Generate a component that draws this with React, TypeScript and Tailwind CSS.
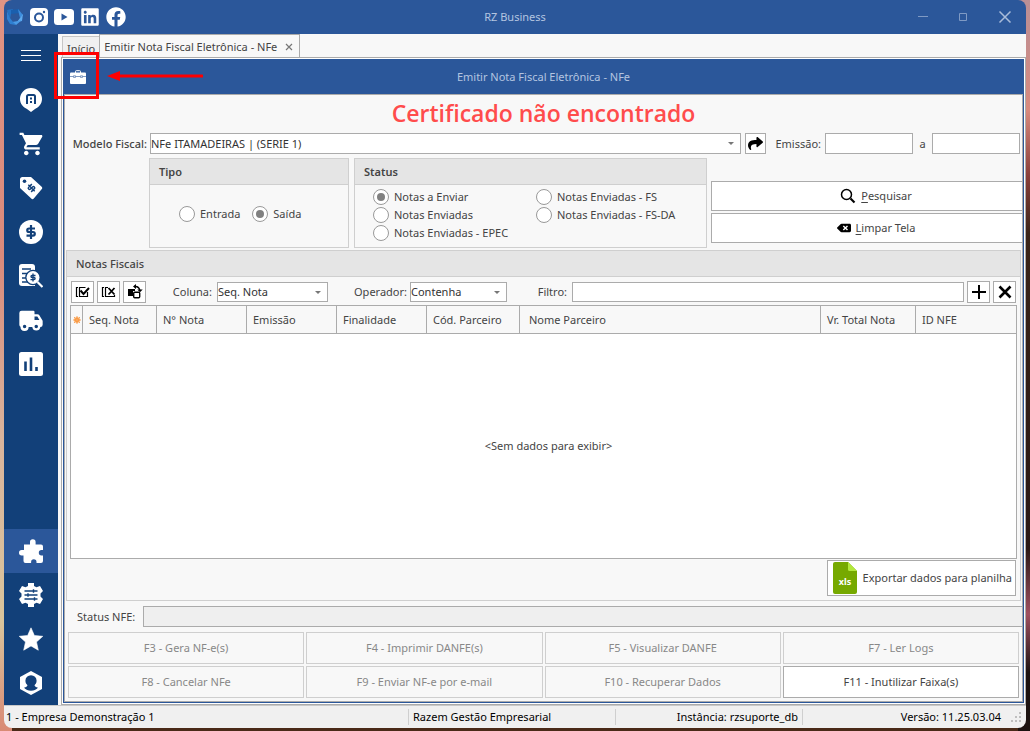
import React, { useState } from 'react';
import { FaBackspace, FaFacebook, FaLinkedin, FaShare } from 'react-icons/fa';
import { IoMdCart } from 'react-icons/io';
import { BiSolidTruck } from 'react-icons/bi';

const InstagramIcon = () => (
  <svg viewBox="0 0 18 18" className="h-[18px] w-[18px]">
    <rect width="18" height="18" rx="4" fill="#fff" />
    <circle cx="9" cy="9.500" r="4" fill="none" stroke="#2b579a" strokeWidth="2" />
    <circle cx="14" cy="4" r="1.200" fill="#2b579a" />
  </svg>
);

const YoutubeIcon = () => (
  <svg viewBox="0 0 20 16" className="h-4 w-5">
    <rect width="20" height="16" rx="3.500" fill="#fff" />
    <path d="M7.500 4.500 13.500 8l-6 3.500z" fill="#2b579a" />
  </svg>
);

const LogoIcon = () => (
  <svg viewBox="0 0 18 18" className="h-[18px] w-[18px]">
    <path d="M1 2l6-1-2 5-1 5z" fill="#2472c4" />
    <path d="M5 2l8-1 1 4-9 1z" fill="#1a5fae" />
    <path d="M12 1l5 6-3 3-1-4z" fill="#3c8ddd" />
    <path d="M17 6l-1 7-5 1 3-4z" fill="#5fabf0" />
    <path d="M16 12l-6 5-4-3 6-1z" fill="#4a9be6" />
    <path d="M1 3l3 7 3 4 3 3-6-1-3-5z" fill="#2f80d2" />
  </svg>
);

const PinIcon = () => (
  <svg viewBox="0 0 24 24" className="h-6 w-6">
    <path d="M12 0a11 11 0 0 1 11 11c0 5-3.500 8.500-7 10l-4 3-4-3c-3.500-1.500-7-5-7-10A11 11 0 0 1 12 0z" fill="#fff" />
    <path d="M8 16V8.500A1.500 1.500 0 0 1 9.500 7h5A1.500 1.500 0 0 1 16 8.500V16" fill="none" stroke="#124079" strokeWidth="2" />
    <path d="M11 9.500h2v2h-2zM11 13h2v2h-2z" fill="#124079" />
  </svg>
);

const TagIcon = () => (
  <svg viewBox="0 0 24 24" className="h-6 w-6">
    <path d="M3.500 1H12l10.400 9.500a2 2 0 0 1 0 3L15 22.300a2 2 0 0 1-3 0L1 12V3.500A2.500 2.500 0 0 1 3.500 1z" fill="#fff" />
    <circle cx="5.500" cy="5.200" r="1.800" fill="#124079" />
    <g transform="rotate(-45 12.500 12)" fill="none" stroke="#124079" strokeWidth="1.500">
      <path d="M15.500 9.500h-4.500a1.200 1.200 0 0 0 0 2.500h3a1.200 1.200 0 0 1 0 2.500H9.500M12.500 7.500v9" />
    </g>
  </svg>
);

const DollarIcon = () => (
  <svg viewBox="0 0 24 24" className="h-6 w-6">
    <circle cx="12" cy="12" r="12" fill="#fff" />
    <path d="M16 8.500H10a1.700 1.700 0 0 0 0 3.500h4a1.800 1.800 0 0 1 0 3.600H7.500M12 5v14" fill="none" stroke="#124079" strokeWidth="2.200" />
  </svg>
);

const ReportIcon = () => (
  <svg viewBox="0 0 24 24" className="h-6 w-6">
    <path d="M3 0h10a3 3 0 0 1 3 3v19H3a3 3 0 0 1-3-3V3a3 3 0 0 1 3-3z" fill="#fff" />
    <path d="M3 5h9M3 9.500h5M3 14h4M3 18h6" stroke="#124079" strokeWidth="1.600" />
    <circle cx="14" cy="13.500" r="7.800" fill="#124079" />
    <circle cx="14" cy="13.500" r="6.500" fill="#fff" />
    <path d="M18.500 18l5 5" stroke="#fff" strokeWidth="2.200" />
    <path d="M16.500 11.500h-3.500a1 1 0 0 0 0 2h2a1 1 0 0 1 0 2.200h-3.500M14 9.500v8" fill="none" stroke="#124079" strokeWidth="1.300" />
  </svg>
);

const ChartIcon = () => (
  <svg viewBox="0 0 24 24" className="h-6 w-6">
    <rect width="24" height="24" rx="2.500" fill="#fff" />
    <path d="M6.500 9.500V19M12 5.500V19M17.500 15V19" stroke="#124079" strokeWidth="2.600" />
  </svg>
);

const PuzzleIcon = () => (
  <svg viewBox="0 0 24 24" className="h-6 w-6" fill="#fff">
    <path d="M5 5.500h6V3a2.800 2.800 0 0 1 5.600 0v2.500H22a2 2 0 0 1 2 2V11h-1.500a2.700 2.700 0 0 0 0 5.400H24V22a2 2 0 0 1-2 2h-4.500v-1a2.700 2.700 0 0 0-5.400 0v1H6.500a2 2 0 0 1-2-2v-5.500H2.700a2.700 2.700 0 0 1 0-5.400H5z" />
  </svg>
);

const GearIcon = () => (
  <svg viewBox="0 0 24 24" className="h-6 w-6">
    <path d="M9 0h6v3l2.500 1.200L21 3l3 5-2.500 2.500v3L24 16l-3 5-3.500-1.200L15 21v3H9v-3l-2.500-1.200L3 21l-3-5 2.500-2.500v-3L0 8l3-5 3.500 1.200L9 3z" fill="#fff" />
    <path d="M5.500 8h13M5.500 12h13M5.500 16h13M14.500 6.300v3.400M9 10.300v3.400M15.500 14.300v3.400" stroke="#124079" strokeWidth="1.400" />
  </svg>
);

const StarIcon = () => (
  <svg viewBox="0 0 24 24" className="h-6 w-6">
    <path d="M12 .8l3.400 7.700 8.400.8-6.300 5.600 1.800 8.300L12 18.900l-7.300 4.300 1.800-8.300L.2 9.300l8.400-.8z" fill="#fff" stroke="#fff" strokeLinejoin="round" strokeWidth=".6" />
  </svg>
);

const UserIcon = () => (
  <svg viewBox="0 0 24 24" className="h-6 w-6">
    <path d="M12 0l11 6v12l-11 6-11-6V6z" fill="#fff" />
    <path d="M12 4.200a5.600 5.600 0 0 1 5.600 5.600c0 2.200-1 3.400-2.100 4.400.3 1.200 1.300 1.700 3.500 2.600-1.800 1.800-4.200 3-7 3s-5.200-1.200-7-3c2.200-.9 3.200-1.400 3.500-2.600-1.100-1-2.100-2.200-2.100-4.400A5.600 5.600 0 0 1 12 4.200z" fill="#124079" />
  </svg>
);

const MenuIcon = () => (
  <svg viewBox="0 0 20 12" className="h-3 w-5">
    <path d="M0 .5h20M0 5.500h20M0 10.500h20" stroke="#fff" />
  </svg>
);

const BriefcaseIcon = () => (
  <svg viewBox="0 0 16 14" className="h-[14px] w-4">
    <path d="M5.500 3V1.500a.8.8 0 0 1 .8-.8h3.400a.8.8 0 0 1 .8.800V3" fill="none" stroke="#fff" />
    <rect y="2.500" width="16" height="11.500" rx="1" fill="#fff" />
    <path d="M0 6.500h3M6 6.500h4M13 6.500h3" stroke="#2b579a" strokeWidth=".6" />
    <path d="M3.500 5.800h2v1.600h-2zM10.500 5.800h2v1.600h-2z" fill="none" stroke="#2b579a" strokeWidth=".6" />
  </svg>
);

const CheckAllIcon = () => (
  <svg viewBox="0 0 16 14" className="h-[14px] w-4" fill="none" stroke="#000">
    <path d="M3 2.500H1.500v9H3M12.500 7v4.500h-8v-9h6" strokeWidth="1.200" />
    <path d="M5.500 5.500l3 3.500L14 3" strokeWidth="2" />
  </svg>
);

const UncheckAllIcon = () => (
  <svg viewBox="0 0 16 14" className="h-[14px] w-4" fill="none" stroke="#000">
    <path d="M3 2.500H1.500v9H3M7 2.500H4.500v9h9V10" strokeWidth="1.200" />
    <path d="M7.500 3l6 6.500M13.500 3l-6 6.500" strokeWidth="1.800" />
  </svg>
);

const InvertIcon = () => (
  <svg viewBox="0 0 16 16" className="h-4 w-4" fill="none" stroke="#000">
    <path d="M1 5h7v2H6v5H1z" fill="#000" stroke="none" />
    <rect x="6.700" y="8.200" width="6" height="5.500" rx="1" fill="#fff" strokeWidth="1.400" />
    <path d="M7.500 2.500c3-.3 5 1.200 5.500 4.500" strokeWidth="1.400" />
    <path d="M9 0v5L6 2.500zM10.300 5.500h5.400L13 8.300z" fill="#000" stroke="none" />
  </svg>
);

const SearchIcon = () => (
  <svg viewBox="0 0 16 16" className="h-4 w-4" fill="none" stroke="#000">
    <circle cx="6.500" cy="6.500" r="5" strokeWidth="1.500" />
    <path d="M10.500 10.500l4 4" strokeWidth="2.200" />
  </svg>
);

const SunIcon = () => (
  <svg viewBox="0 0 10 10" className="mx-auto h-[10px] w-[10px]">
    <circle cx="5" cy="5" r="2.800" fill="#fb8f2d" />
    <path d="M5 1v8M1 5h8M2 2l6 6M8 2L2 8" stroke="#f9a55b" strokeWidth="1" />
  </svg>
);

const XlsIcon = () => (
  <svg viewBox="0 0 24 32" className="h-8 w-6">
    <path d="M2 0h13l9 9v21a2 2 0 0 1-2 2H2a2 2 0 0 1-2-2V2a2 2 0 0 1 2-2z" fill="#76a900" />
    <path d="M15 0l9 9h-7.500A1.500 1.500 0 0 1 15 7.500z" fill="#b2e83c" />
    <text x="12" y="23" textAnchor="middle" fontSize="9" fontWeight="700" fill="#fff">xls</text>
  </svg>
);

interface SelectProps {
  id: string;
  value: string;
  className?: string;
}

const Select: React.FC<SelectProps> = ({ id, value, className }) => (
  <div className={`relative ${className ?? ''}`}>
    <select id={id} defaultValue={value} className="block h-full w-full appearance-none border border-[#ababab] bg-white pr-5 text-[#333]">
      <option>{value}</option>
    </select>
    <svg viewBox="0 0 6 3" className="pointer-events-none absolute top-[9px] right-[7px] h-[3px] w-[6px]">
      <path d="M0 0h6L3 3z" fill="#777" />
    </svg>
  </div>
);

interface RadioProps {
  name: string;
  label: string;
  checked: boolean;
  onSelect: () => void;
}

const Radio: React.FC<RadioProps> = ({ name, label, checked, onSelect }) => (
  <label className="flex items-center gap-[5px]">
    <input
      type="radio"
      name={name}
      checked={checked}
      onChange={onSelect}
      className="grid h-4 w-4 shrink-0 appearance-none place-items-center rounded-full border border-[#999] bg-white before:h-2 before:w-2 before:rounded-full checked:before:bg-[#808080]"
    />
    {label}
  </label>
);

const menuTop = [
  { label: 'Menu', icon: <MenuIcon /> },
  { label: 'Módulos', icon: <PinIcon /> },
  { label: 'Vendas', icon: <IoMdCart className="h-7 w-7" /> },
  { label: 'Preços', icon: <TagIcon /> },
  { label: 'Financeiro', icon: <DollarIcon /> },
  { label: 'Fiscal', icon: <ReportIcon /> },
  { label: 'Entregas', icon: <BiSolidTruck className="h-7 w-7" /> },
  { label: 'Relatórios', icon: <ChartIcon /> },
];

const menuBottom = [
  { label: 'Integrações', icon: <PuzzleIcon />, active: true },
  { label: 'Configurações', icon: <GearIcon /> },
  { label: 'Favoritos', icon: <StarIcon /> },
  { label: 'Usuário', icon: <UserIcon /> },
];

const columns = [
  { label: 'Seq. Nota', width: 'w-[74px]' },
  { label: 'N° Nota', width: 'w-[90px]' },
  { label: 'Emissão', width: 'w-[90px]' },
  { label: 'Finalidade', width: 'w-[90px]' },
  { label: 'Cód. Parceiro', width: 'w-[93px]' },
  { label: 'Nome Parceiro', width: 'w-auto pl-[9px]' },
  { label: 'Vr. Total Nota', width: 'w-[95px]' },
  { label: 'ID NFE', width: 'w-[101px]' },
];

const actions = [
  { label: 'F3 - Gera NF-e(s)', enabled: false },
  { label: 'F4 - Imprimir DANFE(s)', enabled: false },
  { label: 'F5 - Visualizar DANFE', enabled: false },
  { label: 'F7 - Ler Logs', enabled: false },
  { label: 'F8 - Cancelar NFe', enabled: false },
  { label: 'F9 - Enviar NF-e por e-mail', enabled: false },
  { label: 'F10 - Recuperar Dados', enabled: false },
  { label: 'F11 - Inutilizar Faixa(s)', enabled: true },
];

const TitleBar = () => (
  <header className="grid h-[34px] grid-cols-[1fr_auto_1fr] items-center bg-[#2b579a] text-[#b4c5e0]">
    <div className="flex items-center gap-[6px] pl-[2px] text-white">
      <LogoIcon />
      <a href="#instagram" aria-label="Instagram"><InstagramIcon /></a>
      <a href="#youtube" aria-label="YouTube"><YoutubeIcon /></a>
      <a href="#linkedin" aria-label="LinkedIn"><FaLinkedin className="h-5 w-5" /></a>
      <a href="#facebook" aria-label="Facebook"><FaFacebook className="h-5 w-5" /></a>
    </div>
    <h1>RZ Business</h1>
    <div className="flex items-center justify-end gap-[30px] pr-[14px]">
      <button type="button" aria-label="Minimizar">
        <svg viewBox="0 0 10 10" className="h-[10px] w-[10px]"><path d="M0 4.500h10" stroke="#7f9ac4" /></svg>
      </button>
      <button type="button" aria-label="Maximizar">
        <svg viewBox="0 0 10 10" className="h-[10px] w-[10px]"><path d="M1.500 1.500h7v7h-7z" fill="none" stroke="#7f9ac4" /></svg>
      </button>
      <button type="button" aria-label="Fechar">
        <svg viewBox="0 0 14 14" className="h-[14px] w-[14px]"><path d="M1.500 1.500l11 11M12.500 1.500l-11 11" stroke="#a9bcd9" strokeWidth="1.500" /></svg>
      </button>
    </div>
  </header>
);

const Sidebar = () => (
  <nav className="flex w-[54px] shrink-0 flex-col justify-between bg-[#124079] text-white">
    <div>
      {menuTop.map((item) => (
        <button key={item.label} type="button" aria-label={item.label} className="grid h-11 w-full place-items-center">
          {item.icon}
        </button>
      ))}
    </div>
    <div>
      {menuBottom.map((item) => (
        <button key={item.label} type="button" aria-label={item.label} className={`grid h-11 w-full place-items-center ${item.active ? 'bg-[#2b579a]' : ''}`}>
          {item.icon}
        </button>
      ))}
    </div>
  </nav>
);

const Tabs = () => (
  <div className="flex h-[23px] items-end pl-[4px]">
    <button type="button" className="flex h-[21px] items-center border border-r-0 border-b-0 border-[#c6c6c6] bg-[#f0f0f0] px-1 pt-1">Início</button>
    <div className="flex h-[23px] items-center gap-[8px] border border-b-0 border-[#ababab] bg-[#f8f8f8] pt-[2px] pr-[6px] pl-1">
      <button type="button">Emitir Nota Fiscal Eletrônica - NFe</button>
      <button type="button" aria-label="Fechar aba">
        <svg viewBox="0 0 8 8" className="h-2 w-2"><path d="M1 1l6 6M7 1L1 7" stroke="#777" strokeWidth="1.200" /></svg>
      </button>
    </div>
  </div>
);

const Filters = () => {
  const [tipo, setTipo] = useState('Saída');
  const [status, setStatus] = useState('Notas a Enviar');

  const statusRadio = (label: string) => (
    <Radio name="status" label={label} checked={status === label} onSelect={() => setStatus(label)} />
  );

  return (
    <>
      <div className="flex h-[21px] items-center">
        <label htmlFor="modelo" className="w-[85px] shrink-0 pr-[3px] text-right font-medium whitespace-nowrap">Modelo Fiscal:</label>
        <Select id="modelo" value="NFe ITAMADEIRAS | (SERIE 1)" className="h-full flex-1" />
        <button type="button" aria-label="Ir para modelo" className="ml-1 grid h-full w-[21px] place-items-center border border-[#ababab] bg-white">
          <FaShare className="h-[15px] w-[15px] text-black" />
        </button>
        <label htmlFor="emissao-de" className="w-[59px] shrink-0 pr-1 text-right">Emissão:</label>
        <input id="emissao-de" type="text" className="h-full w-[88px] border border-[#ababab] bg-white px-1" />
        <label htmlFor="emissao-ate" className="w-[19px] text-center">a</label>
        <input id="emissao-ate" type="text" className="mr-[2px] h-full w-[88px] border border-[#ababab] bg-white px-1" />
      </div>
      <div className="mt-1 flex pl-[84px]">
        <fieldset className="flex h-[90px] w-[200px] flex-col border border-[#cfcfcf]" aria-label="Tipo">
          <h3 className="flex h-[26px] items-center border-b border-[#cfcfcf] bg-[#e5e5e5] px-[9px] font-semibold">Tipo</h3>
          <div className="flex flex-1 items-center gap-3 pb-1 pl-[29px]">
            <Radio name="tipo" label="Entrada" checked={tipo === 'Entrada'} onSelect={() => setTipo('Entrada')} />
            <Radio name="tipo" label="Saída" checked={tipo === 'Saída'} onSelect={() => setTipo('Saída')} />
          </div>
        </fieldset>
        <fieldset className="ml-[5px] flex h-[90px] flex-1 flex-col border border-[#cfcfcf]" aria-label="Status">
          <h3 className="flex h-[26px] items-center border-b border-[#cfcfcf] bg-[#e5e5e5] px-[9px] font-semibold">Status</h3>
          <div className="grid flex-1 grid-cols-[163px_1fr] content-start gap-y-[2px] pt-1 pl-[18px]">
            {statusRadio('Notas a Enviar')}
            {statusRadio('Notas Enviadas - FS')}
            {statusRadio('Notas Enviadas')}
            {statusRadio('Notas Enviadas - FS-DA')}
            {statusRadio('Notas Enviadas - EPEC')}
          </div>
        </fieldset>
        <div className="ml-1 flex w-[311px] flex-col gap-[2px] pt-[23px]">
          <button type="button" className="flex h-[30px] items-center justify-center gap-[5px] border border-r-0 border-[#ababab] bg-white pl-[18px]">
            <SearchIcon />
            <span><u className="underline-offset-2">P</u>esquisar</span>
          </button>
          <button type="button" className="flex h-[30px] items-center justify-center gap-[5px] border border-r-0 border-[#ababab] bg-white pl-[18px]">
            <FaBackspace className="h-[14px] w-[14px] text-black" />
            <span><u className="underline-offset-2">L</u>impar Tela</span>
          </button>
        </div>
      </div>
    </>
  );
};

const toolButton = 'grid h-[22px] w-[23px] shrink-0 place-items-center border border-[#ababab] bg-white';

const NotasFiscais = () => (
  <section className="mx-px mt-[2px] flex flex-1 flex-col border border-[#cfcfcf]">
    <h2 className="flex h-[26px] items-center border-b border-[#cfcfcf] bg-[#e5e5e5] px-[9px] font-medium">Notas Fiscais</h2>
    <div className="flex h-[28px] items-center pt-px pr-1 pl-1">
      <div className="flex gap-[3px]">
        <button type="button" aria-label="Marcar todas" className={toolButton}><CheckAllIcon /></button>
        <button type="button" aria-label="Desmarcar todas" className={toolButton}><UncheckAllIcon /></button>
        <button type="button" aria-label="Inverter seleção" className={toolButton}><InvertIcon /></button>
      </div>
      <label htmlFor="coluna" className="w-[71px] pr-[5px] text-right">Coluna:</label>
      <Select id="coluna" value="Seq. Nota" className="h-5 w-[111px]" />
      <label htmlFor="operador" className="w-[82px] pr-[3px] text-right">Operador:</label>
      <Select id="operador" value="Contenha" className="h-5 w-[97px]" />
      <label htmlFor="filtro" className="w-[65px] pr-[5px] text-right">Filtro:</label>
      <input id="filtro" type="text" className="h-5 min-w-0 flex-1 border border-[#ababab] bg-white px-1" />
      <button type="button" aria-label="Adicionar filtro" className={`ml-[3px] ${toolButton}`}>
        <svg viewBox="0 0 14 14" className="h-[14px] w-[14px]"><path d="M7 0v14M0 7h14" stroke="#000" strokeWidth="2" /></svg>
      </button>
      <button type="button" aria-label="Limpar filtro" className={`ml-[3px] ${toolButton}`}>
        <svg viewBox="0 0 14 14" className="h-[14px] w-[14px]"><path d="M1.500 1.500l11 11M12.500 1.500l-11 11" stroke="#000" strokeWidth="2.600" /></svg>
      </button>
    </div>
    <div className="mx-[3px] flex min-h-[180px] flex-1 flex-col border border-[#ababab] bg-white">
      <table className="w-full table-fixed border-separate border-spacing-0">
        <thead>
          <tr className="h-7 bg-[#f8f8f8]">
            <th className="w-[11px] border-b border-[#ababab] p-0" aria-label="Indicador"><SunIcon /></th>
            {columns.map((column) => (
              <th key={column.label} className={`border-b border-l border-[#ababab] px-[6px] py-0 text-left font-normal whitespace-nowrap ${column.width}`}>{column.label}</th>
            ))}
          </tr>
        </thead>
      </table>
      <p className="grid flex-1 place-items-center pl-[10px]">&lt;Sem dados para exibir&gt;</p>
    </div>
    <div className="flex justify-end px-1 pt-px pb-1">
      <button type="button" className="flex h-9 items-center gap-[6px] border border-[#ababab] bg-white pr-[3px] pl-[5px]">
        <XlsIcon />
        Exportar dados para planilha
      </button>
    </div>
  </section>
);

const StatusBar = () => (
  <footer className="grid h-[23px] grid-cols-[405fr_207fr_187fr_223fr] items-center border-t border-[#c8c8c8] bg-[#f0f0f0] text-black">
    <span className="border-r border-[#cfcfcf] pl-[2px]">1 - Empresa Demonstração 1</span>
    <span className="border-r border-[#cfcfcf] pl-1">Razem Gestão Empresarial</span>
    <span className="border-r border-[#cfcfcf] pr-1 text-right">Instância: rzsuporte_db</span>
    <span className="flex items-center justify-end gap-[10px] pr-1">
      Versão: 11.25.03.04
      <svg viewBox="0 0 11 11" className="h-[11px] w-[11px]" fill="#bfbfbf">
        <path d="M8 0h2v2H8zM8 4h2v2H8zM4 4h2v2H4zM8 8h2v2H8zM4 8h2v2H4zM0 8h2v2H0z" />
      </svg>
    </span>
  </footer>
);

// Red box and arrow pointing at the toolbar button
const Highlight = () => (
  <div className="pointer-events-none absolute top-[-8px] left-[-10px] flex items-center">
    <div className="h-[47px] w-[45px] border-[3px] border-[#ff0000]" />
    <svg viewBox="0 0 96 10" className="ml-2 h-[10px] w-24">
      <path d="M0 5L13 0v10z" fill="#f00" />
      <path d="M10 5h85" stroke="#f00" strokeWidth="3" strokeLinecap="round" />
    </svg>
  </div>
);

const App: React.FC = () => (
  <div className="relative flex min-h-screen flex-col bg-[#4a2a18] px-1 pb-[3px] font-['Noto_Sans','Open_Sans',sans-serif] text-[11px] leading-4 text-[#444]">
    {/* desktop wallpaper showing at both sides of the window */}
    <div className="absolute inset-y-0 left-0 w-3 bg-[linear-gradient(to_bottom,#e09484,#d98a7c_35%,#d9b49c_60%,#d8c49c_85%,#d98a74)]" />
    <div className="absolute inset-y-0 right-0 w-3 bg-[linear-gradient(to_bottom,#b98f96,#d98a7e_15%,#8a3f3a_24%,#3a2418_32%,#2a1814_75%,#a05060_84%,#1c1210_92%)]" />
    <div className="relative flex flex-1 flex-col overflow-hidden rounded-lg">
      <TitleBar />
      <div className="flex flex-1">
        <Sidebar />
        <div className="flex min-w-0 flex-1 flex-col bg-[#f8f8f8]">
          <Tabs />
          <main className="ml-[3px] flex flex-1 flex-col border border-[#ababab] bg-white p-px">
            <div className="flex flex-1 flex-col border border-[#2b579a]">
              <div className="relative grid h-[34px] grid-cols-[34px_1fr_34px] items-center bg-[#2b579a] text-[#b4c5e0]">
                <button type="button" aria-label="Certificado" className="grid h-full place-items-center pr-[6px]"><BriefcaseIcon /></button>
                <h2 className="text-center">Emitir Nota Fiscal Eletrônica - NFe</h2>
                <Highlight />
              </div>
              <div className="flex flex-1 flex-col border border-[#ababab] bg-[#f8f8f8]">
                <p className="flex h-[38px] items-center justify-center pb-[2px] font-['Open_Sans',sans-serif] text-[23px] leading-7 font-semibold text-[#ff4c4c]">Certificado não encontrado</p>
                <Filters />
                <NotasFiscais />
                <div className="mt-[5px] flex h-[21px] items-center">
                  <label htmlFor="status-nfe" className="w-[78px] pl-3 whitespace-nowrap">Status NFE:</label>
                  <input id="status-nfe" type="text" readOnly className="h-full flex-1 border border-r-0 border-[#ababab] bg-[#efefef] px-1" />
                </div>
                <div className="mt-[5px] grid grid-cols-4 gap-[2px] px-[3px] pb-[3px]">
                  {actions.map((action) => (
                    <button
                      key={action.label}
                      type="button"
                      disabled={!action.enabled}
                      className={`h-8 border ${action.enabled ? 'border-[#ababab] bg-white' : 'border-[#cfcfcf] text-[#888]'}`}
                    >
                      {action.label}
                    </button>
                  ))}
                </div>
              </div>
            </div>
          </main>
        </div>
      </div>
      <StatusBar />
    </div>
  </div>
);

export default App;
